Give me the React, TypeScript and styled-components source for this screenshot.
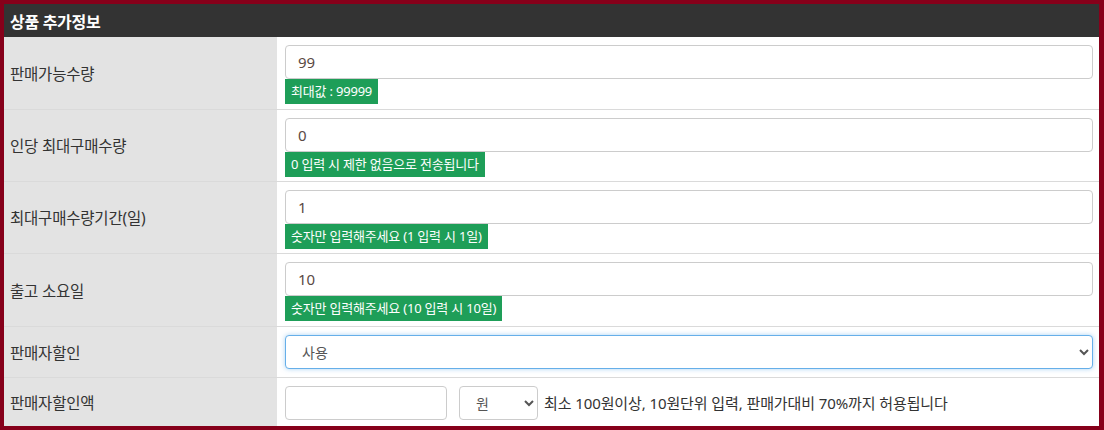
import * as React from 'react';
import styled, { createGlobalStyle } from 'styled-components';

const GlobalStyle = createGlobalStyle`
  html, body {
    margin: 0;
    padding: 0;
    background: #fff;
  }
  body {
    font-family: "Noto Sans", "Noto Sans CJK KR", sans-serif;
    color: #333;
  }
`;

const Frame = styled.div`
  box-sizing: border-box;
  width: 1104px;
  height: 430px;
  overflow: hidden;
  border: 4px solid #86001a;
  border-right-width: 5px;
  background: #fff;
`;

const Header = styled.div`
  height: 33px;
  background: #333;
  color: #fff;
  font-size: 16px;
  font-weight: 700;
  display: flex;
  align-items: center;
  padding-left: 6px;
  letter-spacing: -0.3px;
`;

const Row = styled.div<{ $height: number; $last?: boolean }>`
  display: grid;
  grid-template-columns: 273px 1fr;
  height: ${p => p.$height}px;
  box-sizing: border-box;
  border-bottom: ${p => (p.$last ? 'none' : '1px solid #dadada')};
`;

const Label = styled.div`
  background: #e3e3e3;
  display: flex;
  align-items: center;
  padding-left: 6px;
  font-size: 15.5px;
  color: #333;
  letter-spacing: -0.2px;
`;

const Value = styled.div<{ $inline?: boolean }>`
  padding: 8px 6px 0 8px;
  display: ${p => (p.$inline ? 'flex' : 'block')};
  align-items: flex-start;
`;

const TextInput = styled.input<{ $width?: number }>`
  box-sizing: border-box;
  display: block;
  width: ${p => (p.$width ? `${p.$width}px` : '100%')};
  height: 34px;
  border: 1px solid #ccc;
  border-radius: 4px;
  padding: 0 12px;
  font-family: inherit;
  font-size: 15px;
  color: #5a4a44;
  outline: none;
  background: #fff;
`;

const Badge = styled.div`
  display: inline-block;
  height: 25px;
  line-height: 25px;
  padding: 0 6px;
  background: #1e9e58;
  color: #fff;
  font-size: 13px;
  letter-spacing: -0.2px;
`;

const Select = styled.select<{ $width?: number; $focused?: boolean; $gap?: number }>`
  box-sizing: border-box;
  width: ${p => (p.$width ? `${p.$width}px` : '100%')};
  height: 34px;
  margin-left: ${p => p.$gap ?? 0}px;
  border: 1px solid ${p => (p.$focused ? '#66afe9' : '#ccc')};
  box-shadow: ${p => (p.$focused ? '0 0 5px rgba(102, 175, 233, 0.55)' : 'none')};
  border-radius: 4px;
  padding: 0 12px;
  font-family: inherit;
  font-size: 14px;
  color: #555;
  background: #fff;
  outline: none;
`;

const Note = styled.span`
  font-size: 15px;
  line-height: 34px;
  color: #333;
  margin-left: 6px;
  letter-spacing: -0.1px;
  white-space: nowrap;
`;

type FieldRow = { label: string; value: string; hint: string; height: number };

const fields: FieldRow[] = [
  { label: '판매가능수량', value: '99', hint: '최대값 : 99999', height: 73 },
  { label: '인당 최대구매수량', value: '0', hint: '0 입력 시 제한 없음으로 전송됩니다', height: 72 },
  { label: '최대구매수량기간(일)', value: '1', hint: '숫자만 입력해주세요 (1 입력 시 1일)', height: 72 },
  { label: '출고 소요일', value: '10', hint: '숫자만 입력해주세요 (10 입력 시 10일)', height: 73 },
];

export default function App() {
  return (
    <>
      <GlobalStyle />
      <Frame>
        <Header>상품 추가정보</Header>
        {fields.map(f => (
          <Row key={f.label} $height={f.height}>
            <Label>{f.label}</Label>
            <Value>
              <TextInput defaultValue={f.value} />
              <Badge>{f.hint}</Badge>
            </Value>
          </Row>
        ))}
        <Row $height={51}>
          <Label>판매자할인</Label>
          <Value>
            <Select $focused defaultValue="use">
              <option value="use">사용</option>
              <option value="none">사용안함</option>
            </Select>
          </Value>
        </Row>
        <Row $height={48} $last>
          <Label>판매자할인액</Label>
          <Value $inline>
            <TextInput $width={162} />
            <Select $width={79} $gap={12} defaultValue="won">
              <option value="won">원</option>
              <option value="pct">%</option>
            </Select>
            <Note>최소 100원이상, 10원단위 입력, 판매가대비 70%까지 허용됩니다</Note>
          </Value>
        </Row>
      </Frame>
    </>
  );
}
